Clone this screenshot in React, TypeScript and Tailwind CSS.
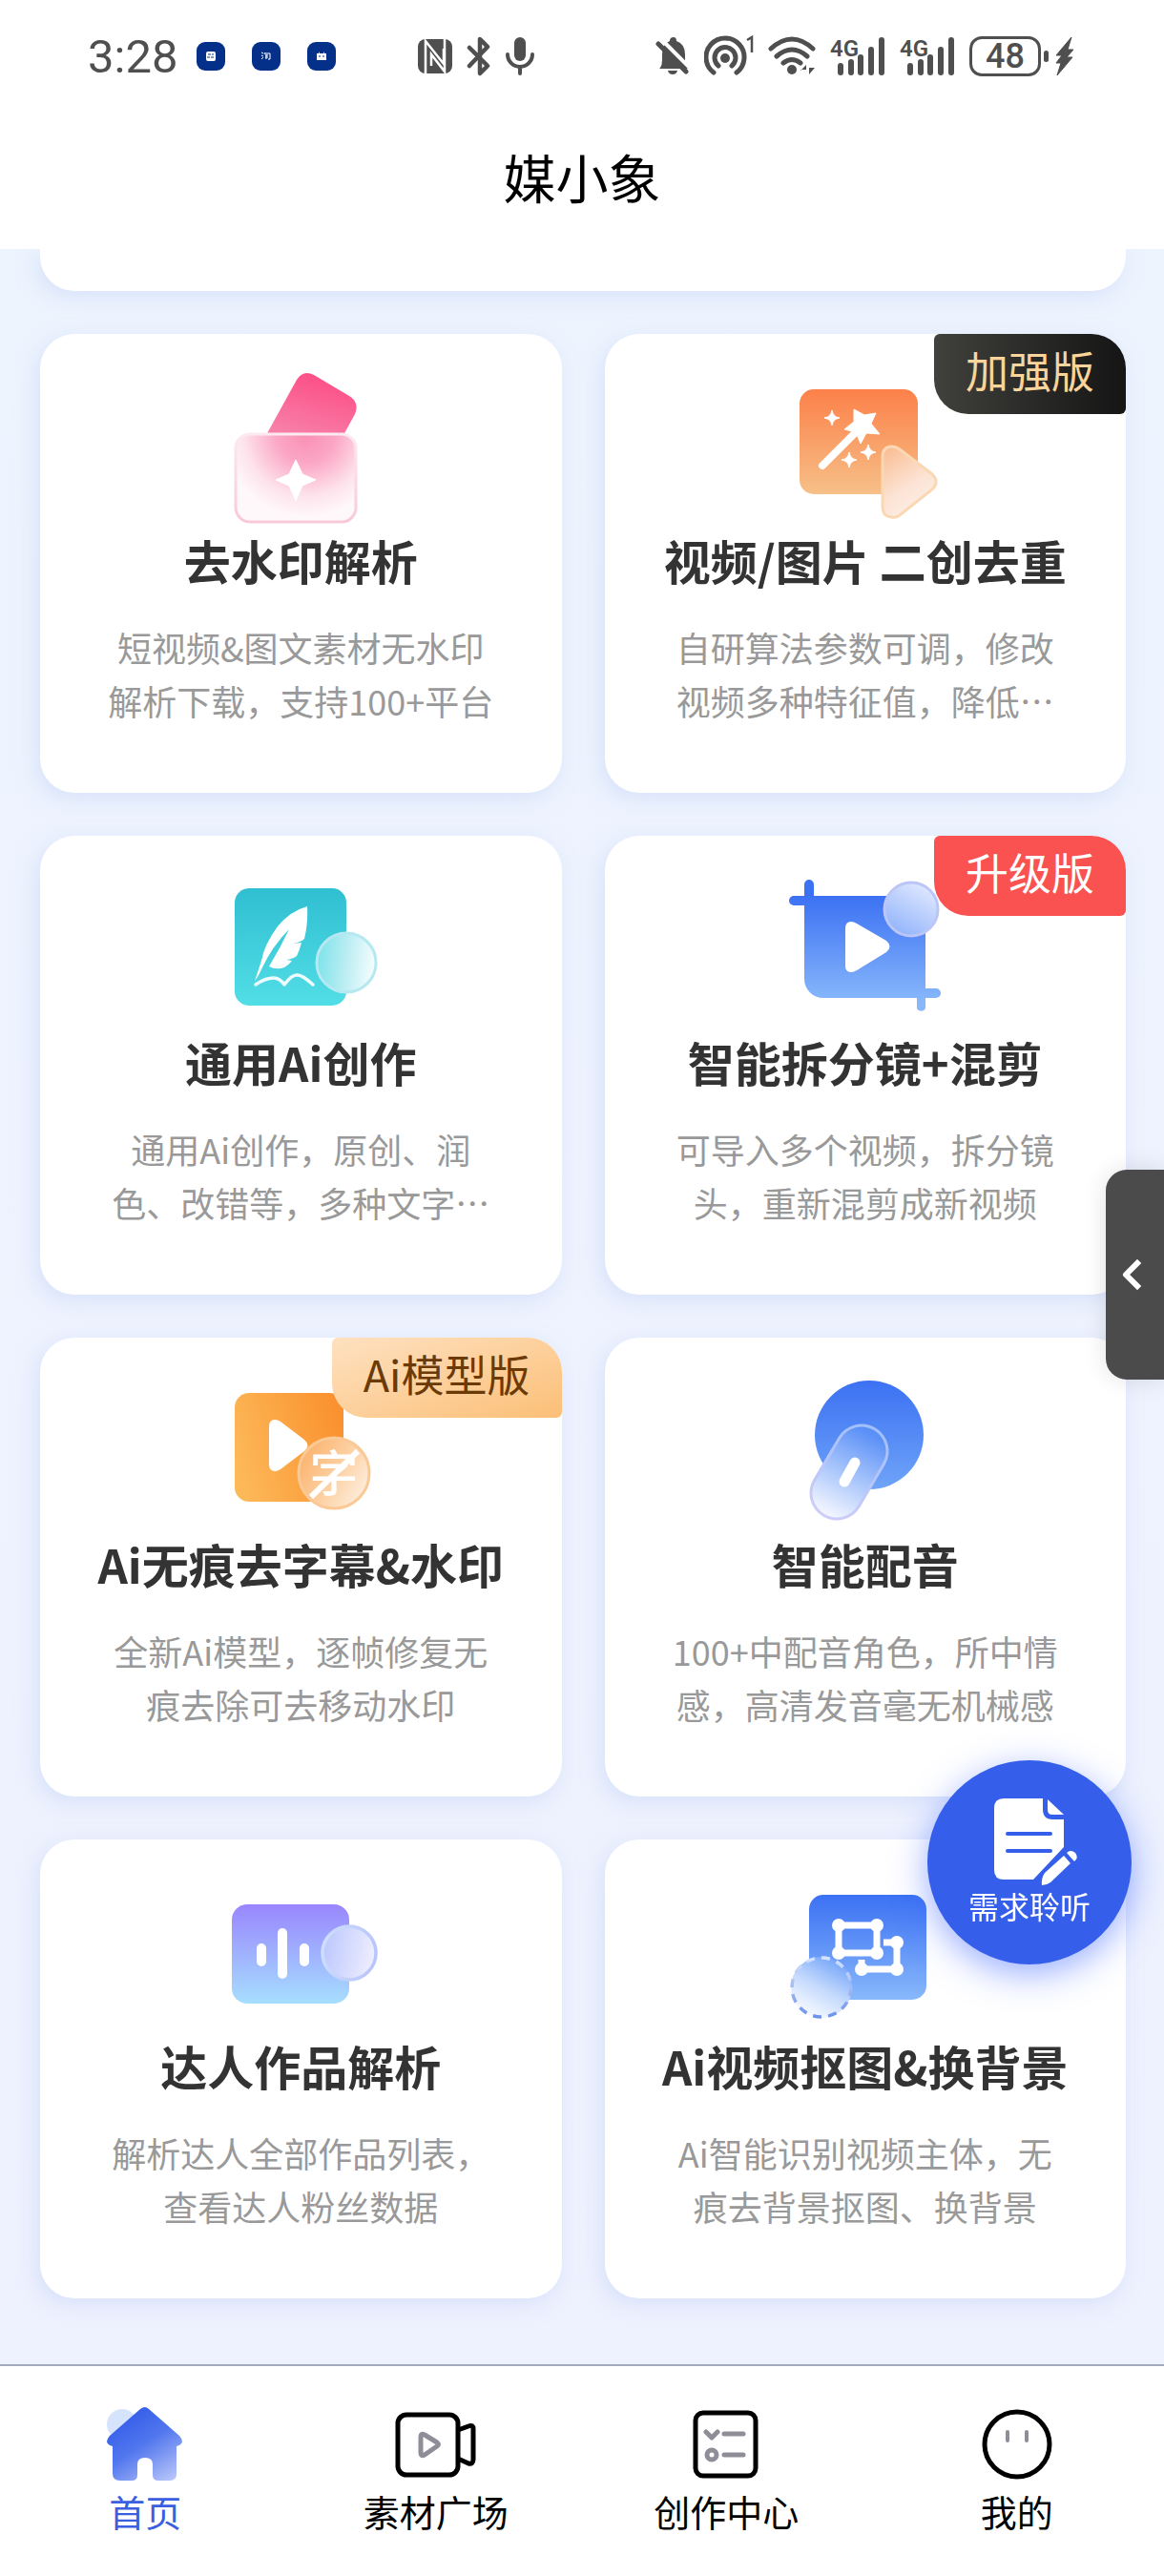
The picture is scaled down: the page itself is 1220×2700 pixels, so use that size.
import type { ReactNode } from 'react';
import { ChevronLeft } from 'lucide-react';

interface Feature {
  title: string;
  lines: [string, string];
  icon: ReactNode;
  badge?: string;
  badgeClass?: string;
}

const WatermarkIcon = () => (
  <svg viewBox="0 0 180 180" className="h-[180px] w-[180px]" aria-hidden="true">
    <defs>
      <linearGradient id="wm-card" x1="0.7" y1="0" x2="0.3" y2="1">
        <stop offset="0" stopColor="#fd4b85" />
        <stop offset="1" stopColor="#f780a8" />
      </linearGradient>
      <radialGradient id="wm-glow" gradientUnits="userSpaceOnUse" cx="96" cy="74" r="88">
        <stop offset="0" stopColor="#fa8fb4" />
        <stop offset="0.35" stopColor="#fba6c4" />
        <stop offset="0.75" stopColor="#fde3ec" />
        <stop offset="1" stopColor="#fff8fb" />
      </radialGradient>
      <linearGradient id="wm-edge" x1="0" y1="0" x2="0" y2="1">
        <stop offset="0" stopColor="#fdeaf1" />
        <stop offset="1" stopColor="#f8c9d7" />
      </linearGradient>
    </defs>
    <path d="M54 76L86 18Q93 7 104 13L141 35Q152 42 147 54L135 76Z" fill="url(#wm-card)" />
    <rect x="22" y="75" width="126" height="92" rx="15" fill="url(#wm-glow)" stroke="url(#wm-edge)" strokeWidth="3" />
    <path d="M85 102L92 117L106 123L92 129L85 145L78 129L64 123L78 117Z" fill="#fff" stroke="#fff" strokeLinejoin="round" />
  </svg>
);

const WandIcon = () => (
  <svg viewBox="0 0 180 180" className="h-[180px] w-[180px]" aria-hidden="true">
    <defs>
      <linearGradient id="wand-bg" x1="0" y1="0" x2="0" y2="1">
        <stop offset="0" stopColor="#fc8049" />
        <stop offset="1" stopColor="#f6c088" />
      </linearGradient>
      <linearGradient id="wand-play" x1="0.1" y1="0" x2="0.6" y2="1">
        <stop offset="0" stopColor="#f9bd92" />
        <stop offset="0.6" stopColor="#fce3d4" />
        <stop offset="1" stopColor="#fdf0e6" />
      </linearGradient>
    </defs>
    <rect x="21" y="28" width="124" height="110" rx="15" fill="url(#wand-bg)" />
    <path d="M45 108L80 73" stroke="#fff" strokeWidth="8" strokeLinecap="round" />
    <path d="M78 49L89 55L101 53L96 64L105 75L91 74L85 85L80 73L68 70L78 62Z" fill="#fff" stroke="#fff" strokeLinejoin="round" />
    <path
      d="M55 50Q56 57 63 58Q56 59 55 66Q54 59 47 58Q54 57 55 50ZM93 86Q94 93 101 94Q94 95 93 102Q92 95 85 94Q92 93 93 86ZM73 94Q74 101 81 102Q74 103 73 110Q72 103 65 102Q72 101 73 94Z"
      fill="#fff"
      stroke="#fff"
      strokeLinejoin="round"
    />
    <path
      d="M108 99Q108 88 118 88Q122 88 126 91L160 117Q168 125 160 133L126 160Q122 163 117 162Q108 161 108 151Z"
      fill="url(#wand-play)"
      stroke="#fbd8b4"
      strokeWidth="3"
    />
  </svg>
);

const FeatherIcon = () => (
  <svg viewBox="0 0 180 180" className="h-[180px] w-[180px]" aria-hidden="true">
    <defs>
      <linearGradient id="fe-bg" x1="0" y1="0" x2="0" y2="1">
        <stop offset="0" stopColor="#30bfd2" />
        <stop offset="1" stopColor="#52dee6" />
      </linearGradient>
      <linearGradient id="fe-ball" x1="0" y1="0.3" x2="1" y2="0.4">
        <stop offset="0" stopColor="#7ce2ea" />
        <stop offset="0.5" stopColor="#b9edf2" />
        <stop offset="1" stopColor="#f6fdfe" />
      </linearGradient>
    </defs>
    <rect x="21" y="25" width="117" height="123" rx="15" fill="url(#fe-bg)" />
    <path
      d="M97 44Q79 49 66 65Q52 84 49 101L42 122Q46 117 49 110Q60 86 78 68Q69 87 57 107Q64 111 73 108Q78 105 81 101L75 100Q82 99 86 96Q89 90 91 82L83 83Q91 81 94 78Q98 62 97 44Z"
      fill="#fff"
    />
    <path d="M43 126Q53 119 62 119Q68 119 73 126Q81 115 87 116Q92 116 103 126" fill="none" stroke="#effcfd" strokeWidth="3.5" strokeLinecap="round" strokeLinejoin="round" />
    <circle cx="138" cy="103" r="31" fill="url(#fe-ball)" stroke="#b6e8f2" strokeWidth="3" />
  </svg>
);

const CropIcon = () => (
  <svg viewBox="0 0 180 180" className="h-[180px] w-[180px]" aria-hidden="true">
    <defs>
      <linearGradient id="crop-bg" gradientUnits="userSpaceOnUse" x1="0" y1="33" x2="0" y2="145">
        <stop offset="0" stopColor="#3c71f3" />
        <stop offset="1" stopColor="#88b8fb" />
      </linearGradient>
      <linearGradient id="crop-ball" x1="0.2" y1="1" x2="0.8" y2="0">
        <stop offset="0" stopColor="#8fb2fb" />
        <stop offset="1" stopColor="#e3eafe" />
      </linearGradient>
    </defs>
    <path
      d="M26 33V21A5 5 0 0 1 36 21V33H153V130H164A5 5 0 0 1 164 140H153V151A5 5 0 0 1 144 151V140H46A20 20 0 0 1 26 120V43H15A5 5 0 0 1 15 33Z"
      fill="url(#crop-bg)"
    />
    <path d="M69 67Q69 60 75 60Q78 60 81 62L112 80Q119 86 112 92L81 111Q78 113 75 113Q69 113 69 106Z" fill="#fff" />
    <circle cx="138" cy="47" r="28" fill="url(#crop-ball)" stroke="#bcc5f8" strokeWidth="3" />
  </svg>
);

const SubtitleIcon = () => (
  <svg viewBox="0 0 180 180" className="h-[180px] w-[180px]" aria-hidden="true">
    <defs>
      <linearGradient id="sub-bg" x1="0" y1="0.6" x2="1" y2="0.3">
        <stop offset="0" stopColor="#fdb858" />
        <stop offset="1" stopColor="#fa912e" />
      </linearGradient>
      <linearGradient id="sub-ball" x1="0" y1="0.2" x2="1" y2="0.8">
        <stop offset="0" stopColor="#fbb069" />
        <stop offset="0.5" stopColor="#fccfa0" />
        <stop offset="1" stopColor="#fef0e2" />
      </linearGradient>
    </defs>
    <rect x="21" y="28" width="114" height="114" rx="15" fill="url(#sub-bg)" />
    <path d="M57 63Q57 56 63 56Q66 56 69 58L94 77Q101 83 94 89L69 108Q66 110 63 110Q57 110 57 103Z" fill="#fff" />
    <circle cx="125" cy="112" r="37" fill="url(#sub-ball)" stroke="#fbc996" strokeWidth="3" />
    <text x="125" y="131" textAnchor="middle" fontSize="51" fontWeight="500" fill="#fff" fontFamily="'Noto Sans CJK SC', sans-serif">
      字
    </text>
    <path d="M101 137L150 89" stroke="#fff" strokeWidth="6" />
  </svg>
);

const VoiceIcon = () => (
  <svg viewBox="0 0 180 180" className="h-[180px] w-[180px]" aria-hidden="true">
    <defs>
      <linearGradient id="vo-bg" x1="0" y1="0" x2="0" y2="1">
        <stop offset="0" stopColor="#3c71f3" />
        <stop offset="1" stopColor="#6fa4f8" />
      </linearGradient>
      <linearGradient id="vo-pill" gradientUnits="userSpaceOnUse" x1="95" y1="70" x2="50" y2="155">
        <stop offset="0" stopColor="#5b90f7" />
        <stop offset="0.5" stopColor="#a5c3fb" />
        <stop offset="1" stopColor="#f2f5ff" />
      </linearGradient>
      <linearGradient id="vo-edge" gradientUnits="userSpaceOnUse" x1="95" y1="60" x2="50" y2="160">
        <stop offset="0" stopColor="#a0bffb" />
        <stop offset="1" stopColor="#cfcdf8" />
      </linearGradient>
    </defs>
    <circle cx="94" cy="72" r="57" fill="url(#vo-bg)" />
    <path d="M86 89L60 133" stroke="url(#vo-edge)" strokeWidth="57" strokeLinecap="round" />
    <path d="M86 89L60 133" stroke="url(#vo-pill)" strokeWidth="51" strokeLinecap="round" />
    <path d="M79 101L68 121" stroke="#fff" strokeWidth="11" strokeLinecap="round" />
  </svg>
);

const ProfileWorksIcon = () => (
  <svg viewBox="0 0 180 180" className="h-[180px] w-[180px]" aria-hidden="true">
    <defs>
      <linearGradient id="pw-bg" x1="0" y1="0" x2="0" y2="1">
        <stop offset="0" stopColor="#9986fd" />
        <stop offset="1" stopColor="#a6deff" />
      </linearGradient>
      <linearGradient id="pw-ball" x1="0" y1="0.4" x2="1" y2="0.6">
        <stop offset="0" stopColor="#bcc8fd" />
        <stop offset="1" stopColor="#f0efff" />
      </linearGradient>
      <linearGradient id="pw-edge" x1="0" y1="0" x2="1" y2="0.2">
        <stop offset="0" stopColor="#cfe0fe" />
        <stop offset="1" stopColor="#b9c6fb" />
      </linearGradient>
    </defs>
    <rect x="18" y="38" width="123" height="104" rx="16" fill="url(#pw-bg)" />
    <path d="M49 84V98M71 68V111M94 84V98" stroke="#fff" strokeWidth="10" strokeLinecap="round" />
    <circle cx="141" cy="89" r="28" fill="url(#pw-ball)" stroke="url(#pw-edge)" strokeWidth="3.5" />
  </svg>
);

const CutoutIcon = () => (
  <svg viewBox="0 0 180 180" className="h-[180px] w-[180px]" aria-hidden="true">
    <defs>
      <linearGradient id="cut-bg" x1="0" y1="0" x2="0" y2="1">
        <stop offset="0" stopColor="#3c71f3" />
        <stop offset="1" stopColor="#88b8fb" />
      </linearGradient>
      <linearGradient id="cut-ball" x1="0.8" y1="0.1" x2="0.3" y2="1">
        <stop offset="0" stopColor="#78a7f9" />
        <stop offset="0.5" stopColor="#c5dafd" />
        <stop offset="1" stopColor="#fafcff" />
      </linearGradient>
      <linearGradient id="cut-edge" x1="0" y1="0" x2="0" y2="1">
        <stop offset="0" stopColor="#d7e3fd" />
        <stop offset="1" stopColor="#6f93ea" />
      </linearGradient>
    </defs>
    <rect x="31" y="28" width="123" height="110" rx="15" fill="url(#cut-bg)" />
    <path d="M62 60H102V89H62ZM109 78H123V106H86V96" fill="none" stroke="#fff" strokeWidth="7" strokeLinejoin="round" />
    <g fill="#fff">
      <circle cx="62" cy="60" r="7" />
      <circle cx="102" cy="60" r="7" />
      <circle cx="62" cy="89" r="7" />
      <circle cx="102" cy="89" r="7" />
      <circle cx="123" cy="78" r="7" />
      <circle cx="123" cy="106" r="7" />
      <circle cx="86" cy="106" r="7" />
    </g>
    <circle cx="44" cy="125" r="32" fill="url(#cut-ball)" />
    <circle cx="44" cy="125" r="31" fill="none" stroke="url(#cut-edge)" strokeWidth="3.5" strokeDasharray="9 7.2" />
  </svg>
);

const features: Feature[] = [
  {
    title: '去水印解析',
    lines: ['短视频&图文素材无水印', '解析下载，支持100+平台'],
    icon: <WatermarkIcon />,
  },
  {
    title: '视频/图片 二创去重',
    lines: ['自研算法参数可调，修改', '视频多种特征值，降低…'],
    icon: <WandIcon />,
    badge: '加强版',
    badgeClass: 'bg-linear-to-r from-[#41423d] to-[#151515] text-[#f9d49b]',
  },
  {
    title: '通用Ai创作',
    lines: ['通用Ai创作，原创、润', '色、改错等，多种文字…'],
    icon: <FeatherIcon />,
  },
  {
    title: '智能拆分镜+混剪',
    lines: ['可导入多个视频，拆分镜', '头，重新混剪成新视频'],
    icon: <CropIcon />,
    badge: '升级版',
    badgeClass: 'bg-[#fa5151] text-white',
  },
  {
    title: 'Ai无痕去字幕&水印',
    lines: ['全新Ai模型，逐帧修复无', '痕去除可去移动水印'],
    icon: <SubtitleIcon />,
    badge: 'Ai模型版',
    badgeClass: 'bg-linear-to-br from-[#fee1c0] to-[#fbbf76] text-[#6b3a06]',
  },
  {
    title: '智能配音',
    lines: ['100+中配音角色，所中情', '感，高清发音毫无机械感'],
    icon: <VoiceIcon />,
  },
  {
    title: '达人作品解析',
    lines: ['解析达人全部作品列表，', '查看达人粉丝数据'],
    icon: <ProfileWorksIcon />,
  },
  {
    title: 'Ai视频抠图&换背景',
    lines: ['Ai智能识别视频主体，无', '痕去背景抠图、换背景'],
    icon: <CutoutIcon />,
  },
];

const Signal = () => (
  <svg viewBox="0 0 58 44" className="h-11 w-[58px]" fill="currentColor" aria-hidden="true">
    <text x="0" y="22" fontSize="24" fontWeight="600" fontFamily="Roboto, sans-serif">
      4G
    </text>
    <rect x="8" y="29" width="6" height="13" rx="3" />
    <rect x="19" y="25" width="6" height="17" rx="3" />
    <rect x="29" y="20" width="6" height="22" rx="3" />
    <rect x="40" y="12" width="6" height="30" rx="3" />
    <rect x="51" y="2" width="6" height="40" rx="3" />
  </svg>
);

const StatusBar = () => (
  <div className="flex h-[118px] items-center pr-[94px] pl-[92px] text-[#4f4f4f]">
    <span className="font-[Roboto] text-[49px] leading-none">3:28</span>
    <div className="ml-5 flex gap-7">
      <svg viewBox="0 0 30 30" className="h-[30px] w-[30px]" aria-hidden="true">
        <rect width="30" height="30" rx="9" fill="#05308a" />
        <rect x="10" y="10" width="10" height="10" rx="2" fill="#fff" />
        <path d="M12 13H18M11 16H19" stroke="#05308a" strokeWidth="1" strokeDasharray="3 1" />
      </svg>
      <svg viewBox="0 0 30 30" className="h-[30px] w-[30px]" aria-hidden="true">
        <rect width="30" height="30" rx="9" fill="#05308a" />
        <path d="M10 11L12 12M10 14L12 15M10 18L12 16M14 11L13 13M14 12H19V18H17M14 14H17M14 16H17M15 13V18" stroke="#fff" strokeWidth="1" fill="none" />
      </svg>
      <svg viewBox="0 0 30 30" className="h-[30px] w-[30px]" aria-hidden="true">
        <rect width="30" height="30" rx="9" fill="#05308a" />
        <path d="M12 10L13 12H17L18 10V12H20V19H10V12H12Z" fill="#fff" />
        <path d="M12 15H14M16 15H18" stroke="#05308a" strokeWidth="1" />
      </svg>
    </div>
    <div className="ml-[86px] flex items-center gap-[15px]">
      <svg viewBox="0 0 36 44" className="h-11 w-9" fill="none" aria-hidden="true">
        <rect x="0" y="4" width="36" height="36" rx="8" fill="currentColor" />
        <path d="M8 40V6L27 30V14M28 4V38L14 20V32" stroke="#fff" strokeWidth="2.5" />
      </svg>
      <svg viewBox="0 0 26 44" className="h-11 w-[26px]" fill="none" stroke="currentColor" strokeWidth="4.5" strokeLinecap="round" strokeLinejoin="round" aria-hidden="true">
        <path d="M3 13L22 32L14 40V4L22 12L3 32" />
      </svg>
      <svg viewBox="0 0 30 44" className="h-11 w-[30px]" fill="none" stroke="currentColor" strokeWidth="4" strokeLinecap="round" aria-hidden="true">
        <rect x="9" y="2" width="12" height="25" rx="6" fill="currentColor" stroke="none" />
        <path d="M2 20A13 13 0 0 0 28 20M15 34V40" />
      </svg>
    </div>
    <div className="ml-auto flex items-center gap-[15px]">
      <svg viewBox="0 0 36 44" className="h-11 w-9" aria-hidden="true">
        <path d="M5 34Q7 31 7 26V20Q7 9 15 6Q15 2 19 2Q22 2 22 6Q31 9 31 20V27Q32 32 34 35H4Z" fill="currentColor" />
        <path d="M13 37H23Q22 41 18 41Q14 41 13 37Z" fill="currentColor" />
        <path d="M6 4L37 35" stroke="#fff" strokeWidth="4" />
        <path d="M3 9L32 38" stroke="currentColor" strokeWidth="5" strokeLinecap="round" />
      </svg>
      <svg viewBox="0 0 52 44" className="h-11 w-[52px]" fill="none" stroke="currentColor" strokeWidth="5" strokeLinecap="round" aria-hidden="true">
        <circle cx="22" cy="24" r="5" fill="currentColor" stroke="none" />
        <path d="M10 39A20 20 0 1 1 34 39M15 32A11 11 0 1 1 29 32" />
        <path d="M45 5L50 2V18" strokeWidth="2.5" strokeLinecap="butt" />
      </svg>
      <svg viewBox="0 0 50 44" className="h-11 w-[50px]" fill="none" stroke="currentColor" strokeWidth="5" strokeLinecap="round" aria-hidden="true">
        <path d="M3 14Q25 -6 47 14M9 22Q25 8 41 22M16 29Q25 22 34 29" />
        <circle cx="25" cy="36" r="5" fill="currentColor" stroke="none" />
        <path d="M34 37L40 31V41V36H34ZM43 31V41L49 34H43Z" fill="currentColor" stroke="none" />
      </svg>
      <Signal />
      <Signal />
      <div className="flex items-center gap-[7px]">
        <div className="flex items-center gap-[3px]">
          <span className="flex h-[42px] w-[75px] items-center justify-center rounded-[13px] border-3 border-current font-[Roboto] text-[36px] leading-none font-medium">
            48
          </span>
          <span className="h-3 w-[5px] rounded-full bg-current" />
        </div>
        <svg viewBox="0 0 20 44" className="h-11 w-5" fill="currentColor" stroke="currentColor" strokeLinejoin="round" aria-hidden="true">
          <path d="M17 2L1 21L7 21L1 29L6 29L2 42L18 23L12 23L19 15L13 15Z" />
        </svg>
      </div>
    </div>
  </div>
);

const FeatureCard = ({ feature }: { feature: Feature }) => (
  <a
    href="#"
    className="relative flex flex-col items-center rounded-[36px] bg-white pt-[30px] pb-[69px] shadow-[-4px_6px_20px_rgba(196,212,248,0.5)]"
  >
    {feature.icon}
    <h2 className="text-[49px] leading-[54px] font-bold whitespace-nowrap text-[#333333]">{feature.title}</h2>
    <p className="mt-9 text-center text-[36px] leading-[56px] whitespace-nowrap text-[#999999]">
      {feature.lines[0]}
      <br />
      {feature.lines[1]}
    </p>
    {feature.badge && (
      <span
        className={`absolute top-0 right-0 rounded-tl-md rounded-tr-[36px] rounded-br-md rounded-bl-[36px] px-[33px] pb-2 text-[45px] leading-[76px] ${feature.badgeClass}`}
      >
        {feature.badge}
      </span>
    )}
  </a>
);

const tabs = [
  {
    label: '首页',
    active: true,
    icon: (
      <svg viewBox="0 0 88 88" className="h-[88px] w-[88px]" aria-hidden="true">
        <defs>
          <linearGradient id="home-fill" gradientUnits="userSpaceOnUse" x1="28" y1="20" x2="72" y2="88">
            <stop offset="0" stopColor="#3b63ea" />
            <stop offset="0.35" stopColor="#5176ee" />
            <stop offset="1" stopColor="#c0ccfa" />
          </linearGradient>
        </defs>
        <circle cx="20" cy="24" r="16" fill="#d5e4fc" />
        <path
          d="M39 8Q44 4 48 8L80 36Q86 43 80 46L77 47V76Q77 83 70 83H58Q52 83 52 77V66Q52 59 44 59Q36 59 36 66V77Q36 83 30 83H18Q10 83 10 76V47L7 46Q1 43 7 36Z"
          fill="url(#home-fill)"
        />
      </svg>
    ),
  },
  {
    label: '素材广场',
    icon: (
      <svg viewBox="0 0 88 88" className="h-[88px] w-[88px]" fill="none" stroke="#000" strokeWidth="5" strokeLinejoin="round" aria-hidden="true">
        <rect x="4" y="14" width="63" height="63" rx="9" />
        <path d="M67 30L78 26Q83 24 83 29V61Q83 66 78 65L67 60" />
        <path d="M28 37Q28 33 32 35L45 43Q48 45 45 47L32 56Q28 58 28 54Z" stroke="#8e8d98" />
      </svg>
    ),
  },
  {
    label: '创作中心',
    icon: (
      <svg viewBox="0 0 88 88" className="h-[88px] w-[88px]" fill="none" stroke="#000" strokeWidth="5" strokeLinecap="round" strokeLinejoin="round" aria-hidden="true">
        <rect x="12" y="12" width="63" height="66" rx="8" />
        <g stroke="#8e8d98">
          <path d="M23 32L29 38L35 32M42 34H62M42 56H62" />
          <circle cx="29" cy="56" r="5" />
        </g>
      </svg>
    ),
  },
  {
    label: '我的',
    icon: (
      <svg viewBox="0 0 88 88" className="h-[88px] w-[88px]" fill="none" stroke="#000" strokeWidth="5" strokeLinecap="round" aria-hidden="true">
        <circle cx="44" cy="45" r="34" />
        <path d="M34 32V41M54 32V41" stroke="#8e8d98" strokeWidth="4" />
      </svg>
    ),
  },
];

const App = () => {
  return (
    <div
      lang="zh-CN"
      className="flex min-h-screen flex-col bg-linear-to-b from-[#edf4fe] to-[#eef1fe] font-['Noto_Sans_CJK_SC','Noto_Sans',sans-serif]"
    >
      <header className="bg-white pb-[11px]">
        <StatusBar />
        <h1 className="text-center text-[55px] leading-[132px] text-black">媒小象</h1>
      </header>

      <main className="flex-1 overflow-hidden pr-10 pb-[69px] pl-[42px]">
        {/* bottom edge of the banner that is scrolled under the header */}
        <div className="h-11 rounded-b-[36px] bg-white shadow-[-4px_6px_20px_rgba(196,212,248,0.5)]" />
        <div className="mt-[45px] grid grid-cols-2 gap-[45px]">
          {features.map((feature) => (
            <FeatureCard key={feature.title} feature={feature} />
          ))}
        </div>
      </main>

      <nav className="grid grid-cols-4 border-t-2 border-[#a3aabd] bg-white pt-[37px] pr-0.5 pb-[41px]">
        {tabs.map((tab) => (
          <a key={tab.label} href="#" className={`flex flex-col items-center ${tab.active ? 'text-[#3b5fe0]' : 'text-black'}`}>
            {tab.icon}
            <span className="text-[38px] leading-[54px]">{tab.label}</span>
          </a>
        ))}
      </nav>

      {/* Side drawer handle */}
      <button
        type="button"
        aria-label="展开"
        className="fixed top-[1226px] right-0 flex h-[220px] w-[61px] items-center justify-center rounded-l-[22px] bg-[#4b4b4b] pr-2 text-white shadow-[0_0_24px_rgba(0,0,0,0.12)]"
      >
        <ChevronLeft className="h-12 w-12" strokeWidth={3} strokeLinecap="square" />
      </button>

      {/* Feedback button */}
      <button
        type="button"
        className="fixed right-[34px] bottom-[641px] flex h-[214px] w-[214px] flex-col items-center rounded-full bg-[#355fea] pt-[34px] text-white shadow-[0_10px_36px_rgba(53,95,255,0.5)]"
      >
        <svg viewBox="0 0 100 100" className="ml-3 h-[100px] w-[100px]" fill="#fff" aria-hidden="true">
          <path d="M17 6H58V17Q58 28 68 28H80V57L48 91H17Q7 91 7 81V16Q7 6 17 6Z" />
          <path d="M63 7L80 23H68Q63 23 63 18Z" />
          <path d="M21 43H66M21 61H66" stroke="#355fea" strokeWidth="4" strokeLinecap="round" />
          <path d="M57 97Q56 90 60 84L80 66L87 74L66 94Q62 97 57 97ZM83 63Q87 59 92 63Q96 68 91 72Z" />
        </svg>
        <span className="text-[32px] leading-9">需求聆听</span>
      </button>
    </div>
  );
};

export default App;
